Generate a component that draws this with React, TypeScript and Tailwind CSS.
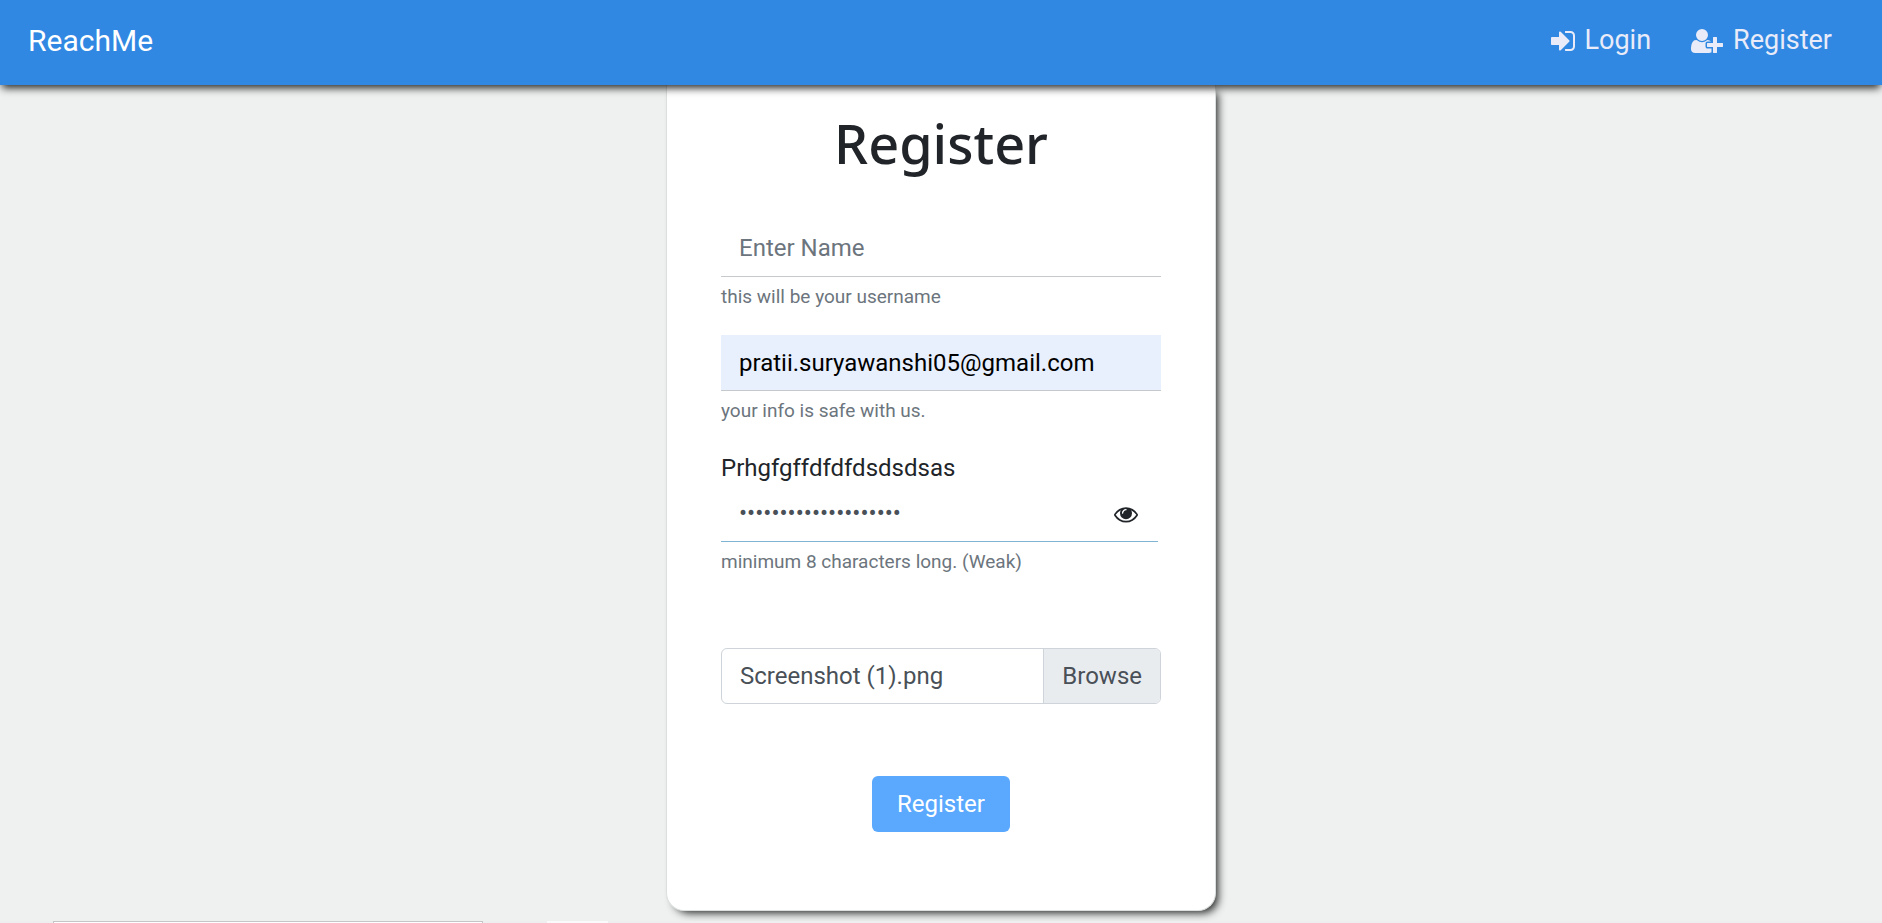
import { useState } from "react";

const EYE =
  "M1664 960q-152-236-381-353 61 104 61 225 0 185-131.5 316.5t-316.5 131.5-316.5-131.5-131.5-316.5q0-121 61-225-229 117-381 353 133 205 333.5 326.5t434.5 121.5 434.5-121.5 333.5-326.5zm-720-384q0-20-14-34t-34-14q-125 0-214.5 89.5t-89.5 214.5q0 20 14 34t34 14 34-14 14-34q0-86 61-147t147-61q20 0 34-14t14-34zm848 384q0 34-20 69-140 230-376.5 368.5t-499.5 138.5-499.5-139-376.5-368q-20-35-20-69t20-69q140-229 376.5-368t499.5-139 499.5 139 376.5 368q20 35 20 69z";
const SIGN_IN =
  "M1312 896q0 26-19 45l-544 544q-19 19-45 19t-45-19-19-45v-288h-448q-26 0-45-19t-19-45v-384q0-26 19-45t45-19h448v-288q0-26 19-45t45-19 45 19l544 544q19 19 19 45zm352-352v704q0 119-84.5 203.5t-203.5 84.5h-320q-13 0-22.5-9.5t-9.5-22.5q0-4-1-20t-.5-26.5 3-23.5 10-19.5 20.5-6.5h320q66 0 113-47t47-113v-704q0-66-47-113t-113-47h-312l-11.5-1-11.5-3-8-5.5-7-9-2-13.5q0-4-1-20t-.5-26.5 3-23.5 10-19.5 20.5-6.5h320q119 0 203.5 84.5t84.5 203.5z";
const USER_PLUS =
  "M704 896q-159 0-271.5-112.5t-112.5-271.5 112.5-271.5 271.5-112.5 271.5 112.5 112.5 271.5-112.5 271.5-271.5 112.5zm960 128h352q13 0 22.5 9.5t9.5 22.5v192q0 13-9.5 22.5t-22.5 9.5h-352v352q0 13-9.5 22.5t-22.5 9.5h-192q-13 0-22.5-9.5t-9.5-22.5v-352h-352q-13 0-22.5-9.5t-9.5-22.5v-192q0-13 9.5-22.5t22.5-9.5h352v-352q0-13 9.5-22.5t22.5-9.5h192q13 0 22.5 9.5t9.5 22.5v352zm-736 224q0 52 38 90t90 38h256v238q-68 50-171 50h-874q-121 0-194-69t-73-190q0-53 3.5-103.5t14-109 26.5-108.5 43-97.5 62-81 85.5-53.5 111.5-20q19 0 39 17 79 61 154.5 91.5t164.5 30.5 164.5-30.5 154.5-91.5q20-17 39-17 132 0 217 96h-223q-52 0-90 38t-38 90v192z";

function Navbar() {
  return (
    <nav className="relative z-10 flex h-[85px] shrink-0 items-center justify-between bg-[#3088e3] pr-[50px] pb-[3px] pl-7 shadow-[0_5px_8px_-2px_rgba(0,0,0,0.85)]">
      <a href="#home" className="text-[30px] text-white">
        ReachMe
      </a>
      <div className="flex items-center gap-10 text-[27px] text-[#e9ecf8]">
        <a href="#login" className="flex items-center gap-2">
          <svg viewBox="0 0 1792 1792" className="size-7 fill-current" aria-hidden="true">
            <path d={SIGN_IN} />
          </svg>
          Login
        </a>
        <a href="#register" className="flex items-center gap-2.5">
          <svg viewBox="0 0 2048 1792" className="h-7 w-8 fill-current" aria-hidden="true">
            <path d={USER_PLUS} />
          </svg>
          Register
        </a>
      </div>
    </nav>
  );
}

function RegisterForm() {
  const [name, setName] = useState("");
  const [email, setEmail] = useState("pratii.suryawanshi05@gmail.com");
  const [password, setPassword] = useState("Prhgfgffdfdfdsdsdsas");
  const [visible, setVisible] = useState(false);
  const [file, setFile] = useState("Screenshot (1).png");

  return (
    <form
      onSubmit={(e) => e.preventDefault()}
      className="mx-auto flex w-full max-w-[550px] flex-col rounded-b-[18px] border border-t-0 border-[#dcdfdf] bg-white px-[54px] pt-5 pb-[78px] shadow-[5px_5px_8px_-3px_rgba(0,0,0,0.85)]"
    >
      <h1 className="text-center font-['Noto_Sans',sans-serif] text-[54px] leading-[76px] font-medium">
        Register
      </h1>

      <input
        type="text"
        aria-label="Name"
        aria-describedby="name-hint"
        placeholder="Enter Name"
        value={name}
        onChange={(e) => setName(e.target.value)}
        className="mt-10 h-14 w-full border-b border-[#c6cacd] px-[18px] pb-0.5 text-[#495057] outline-none placeholder:text-[#6c757d]"
      />
      <small id="name-hint" className="mt-1.5 text-[19px] leading-7 text-[#6c757d]">
        this will be your username
      </small>

      <input
        type="email"
        aria-label="Email"
        aria-describedby="email-hint"
        value={email}
        onChange={(e) => setEmail(e.target.value)}
        className="mt-6 h-14 w-full border-b border-[#c6cacd] bg-[#e8f0fe] px-[18px] text-black outline-none"
      />
      <small id="email-hint" className="mt-1.5 text-[19px] leading-7 text-[#6c757d]">
        your info is safe with us.
      </small>

      <label htmlFor="password" className="mt-[25px] leading-9">
        {password}
      </label>
      <div className="relative mr-[3px]">
        <input
          id="password"
          type={visible ? "text" : "password"}
          aria-describedby="password-hint"
          value={password}
          onChange={(e) => setPassword(e.target.value)}
          className="h-14 w-full border-b border-[#80b4d2] pr-14 pb-0.5 pl-[18px] text-[#495057] outline-none"
        />
        <button
          type="button"
          aria-label="Show password"
          onClick={() => setVisible(!visible)}
          className="absolute top-4 right-5"
        >
          <svg viewBox="0 0 1792 1792" className="size-6 fill-current" aria-hidden="true">
            <path d={EYE} />
          </svg>
        </button>
      </div>
      <small id="password-hint" className="mt-1.5 text-[19px] leading-7 text-[#6c757d]">
        minimum 8 characters long. (Weak)
      </small>

      <label className="mt-[72px] flex h-14 cursor-pointer overflow-hidden rounded-md border border-[#ced4da] leading-[54px] text-[#495057]">
        <input
          type="file"
          className="sr-only"
          aria-label="Profile picture"
          onChange={(e) => setFile(e.target.files?.[0]?.name ?? file)}
        />
        <span className="flex-1 truncate px-[18px]">{file}</span>
        <span className="border-l border-[#ced4da] bg-[#e9ecef] px-[18px]">Browse</span>
      </label>

      <button
        type="submit"
        className="mt-[72px] h-14 self-center rounded-md bg-[#5aa9ff] px-[25px] text-white"
      >
        Register
      </button>
    </form>
  );
}

export default function App() {
  return (
    <div className="flex h-screen flex-col overflow-hidden bg-[#eff1f1] font-[Roboto,sans-serif] text-2xl text-[#212529]">
      <Navbar />
      <main className="shrink-0">
        <RegisterForm />
      </main>
      <footer className="mt-2.5 flex shrink-0 items-start gap-16 bg-[#eeeeee] pl-[53px]">
        <input
          type="text"
          aria-label="Message"
          className="h-14 w-[430px] border border-[#c4c6c6] bg-white outline-none"
        />
        <button type="button" aria-label="Send" className="h-14 w-[61px] bg-[#fafafa]" />
      </footer>
    </div>
  );
}
